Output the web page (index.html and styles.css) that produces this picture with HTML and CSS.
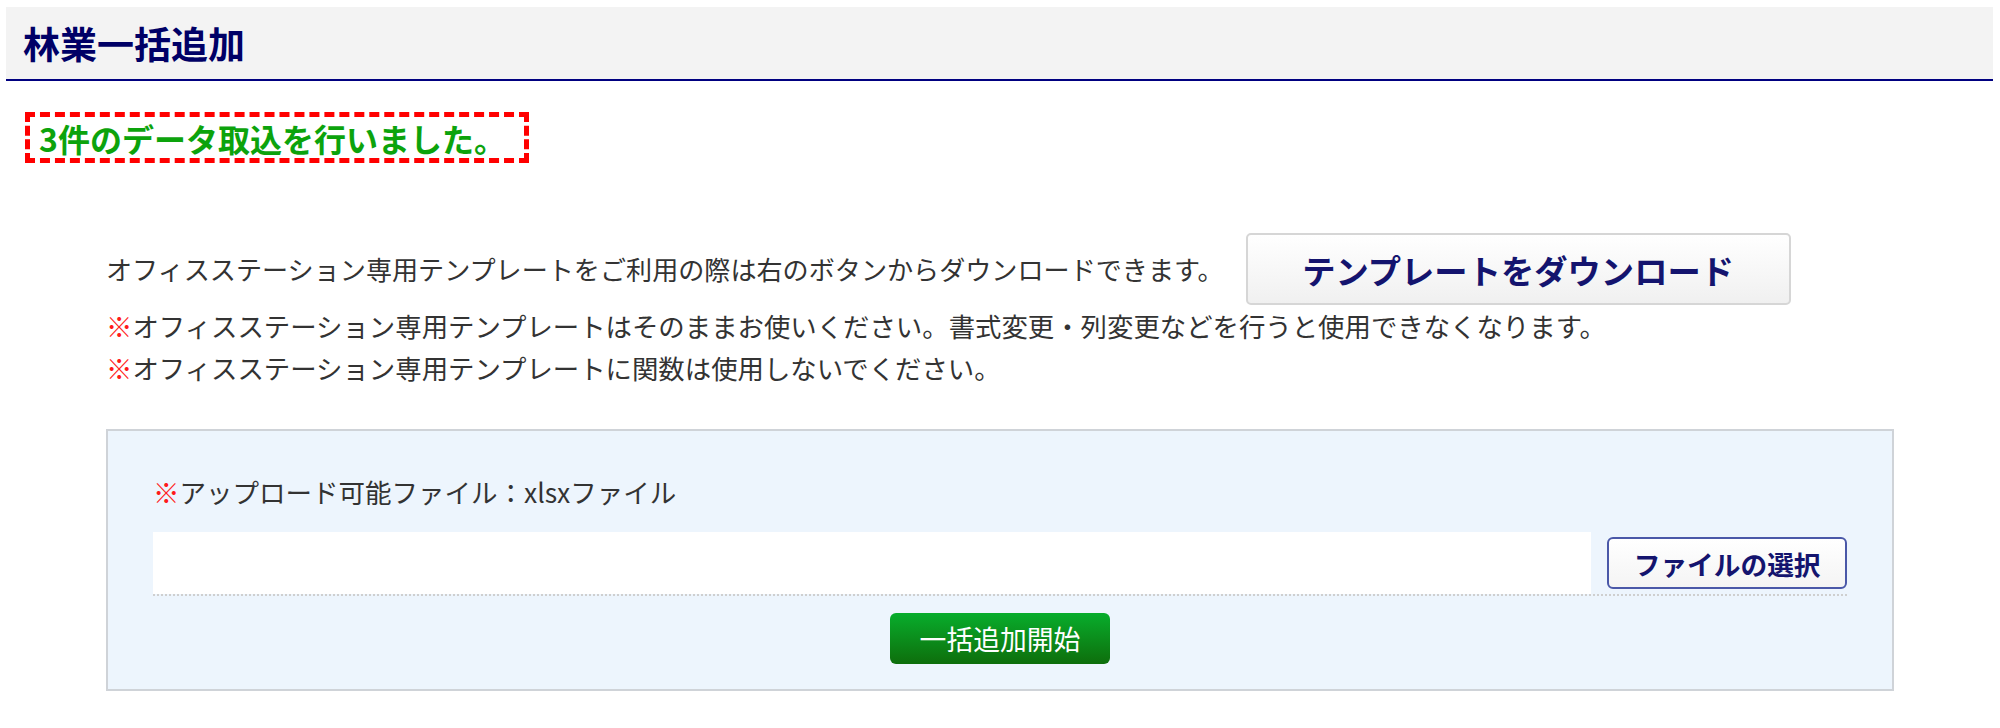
FILE: index.html
```html
<!DOCTYPE html>
<html lang="ja">
<head>
<meta charset="utf-8">
<title>林業一括追加</title>
<link rel="stylesheet" href="styles.css">
</head>
<body>
<header class="page-head">
  <h1 class="page-title">林業一括追加</h1>
</header>
<div class="msg-wrap">
  <p class="msg">3件のデータ取込を行いました。</p>
</div>
<section class="content">
  <div class="tpl-row">
    <span class="tpl-text">オフィスステーション専用テンプレートをご利用の際は右のボタンからダウンロードできます。</span>
    <button class="tpl-btn">テンプレートをダウンロード</button>
  </div>
  <p class="note"><span class="mark">※</span>オフィスステーション専用テンプレートはそのままお使いください。書式変更・列変更などを行うと使用できなくなります。</p>
  <p class="note"><span class="mark">※</span>オフィスステーション専用テンプレートに関数は使用しないでください。</p>
  <div class="panel">
    <p class="label"><span class="mark">※</span>アップロード可能ファイル：xlsxファイル</p>
    <div class="file-row">
      <div class="file-field"></div>
      <button class="file-btn">ファイルの選択</button>
    </div>
    <div class="submit-row">
      <button class="submit-btn">一括追加開始</button>
    </div>
  </div>
</section>
</body>
</html>
```
FILE: styles.css
```css
html, body {
  margin: 0;
  padding: 0;
  background: #ffffff;
}
body {
  font-family: "Noto Sans CJK JP", "Noto Sans", sans-serif;
  color: #333333;
  padding: 7px 7px 0 6px;
}
.page-head {
  background: #f3f3f3;
  height: 72px;
  border-bottom: 2px solid #000080;
  display: flex;
  align-items: center;
  padding-left: 17px;
}
.page-title {
  margin: 0;
  font-size: 37px;
  font-weight: bold;
  color: #000066;
  line-height: 1;
}
.msg-wrap {
  padding: 31px 0 0 19px;
  display: flex;
}
.msg {
  margin: 0;
  border: 5px dashed #ff0000;
  height: 41px;
  padding: 0 18px 0 9px;
  display: flex;
  align-items: center;
  font-size: 32px;
  font-weight: bold;
  color: #0ca30c;
  line-height: 1;
}
.content {
  padding: 70px 0 0 100px;
  width: 1788px;
}
.tpl-row {
  display: flex;
  align-items: center;
  gap: 22px;
}
.tpl-text {
  font-size: 26.1px;
  line-height: 42px;
}
.tpl-btn {
  width: 545px;
  height: 72px;
  border: 2px solid #d6d6d6;
  border-radius: 5px;
  background: linear-gradient(#ffffff, #f0f0f0);
  font-family: inherit;
  font-size: 33.3px;
  font-weight: bold;
  color: #14146e;
  padding: 0;
}
.note {
  margin: 0;
  font-size: 26.4px;
  line-height: 42px;
}
.mark {
  color: #ff1a1a;
}
.panel {
  margin-top: 40px;
  background: #edf5fd;
  border: 2px solid #cfd3d8;
  padding: 40px 45px 25px 45px;
}
.label {
  margin: 0;
  font-size: 26.5px;
  line-height: 42px;
}
.file-row {
  margin-top: 19px;
  display: flex;
  align-items: center;
  height: 62px;
  border-bottom: 2px dotted #cfcfcf;
}
.file-field {
  background: #ffffff;
  height: 62px;
  width: 1440px;
}
.file-btn {
  margin-left: 16px;
  width: 240px;
  height: 52px;
  border: 2px solid #4a58a8;
  border-radius: 6px;
  background: linear-gradient(#ffffff, #f4f4f4);
  font-family: inherit;
  font-size: 26.7px;
  font-weight: bold;
  color: #14146e;
  padding: 0;
}
.submit-row {
  display: flex;
  justify-content: center;
  margin-top: 17px;
}
.submit-btn {
  width: 220px;
  height: 51px;
  border: none;
  border-radius: 6px;
  background: linear-gradient(#08ad2c, #0e6e0c);
  font-family: inherit;
  font-size: 26.8px;
  color: #ffffff;
  padding: 0;
}
```
